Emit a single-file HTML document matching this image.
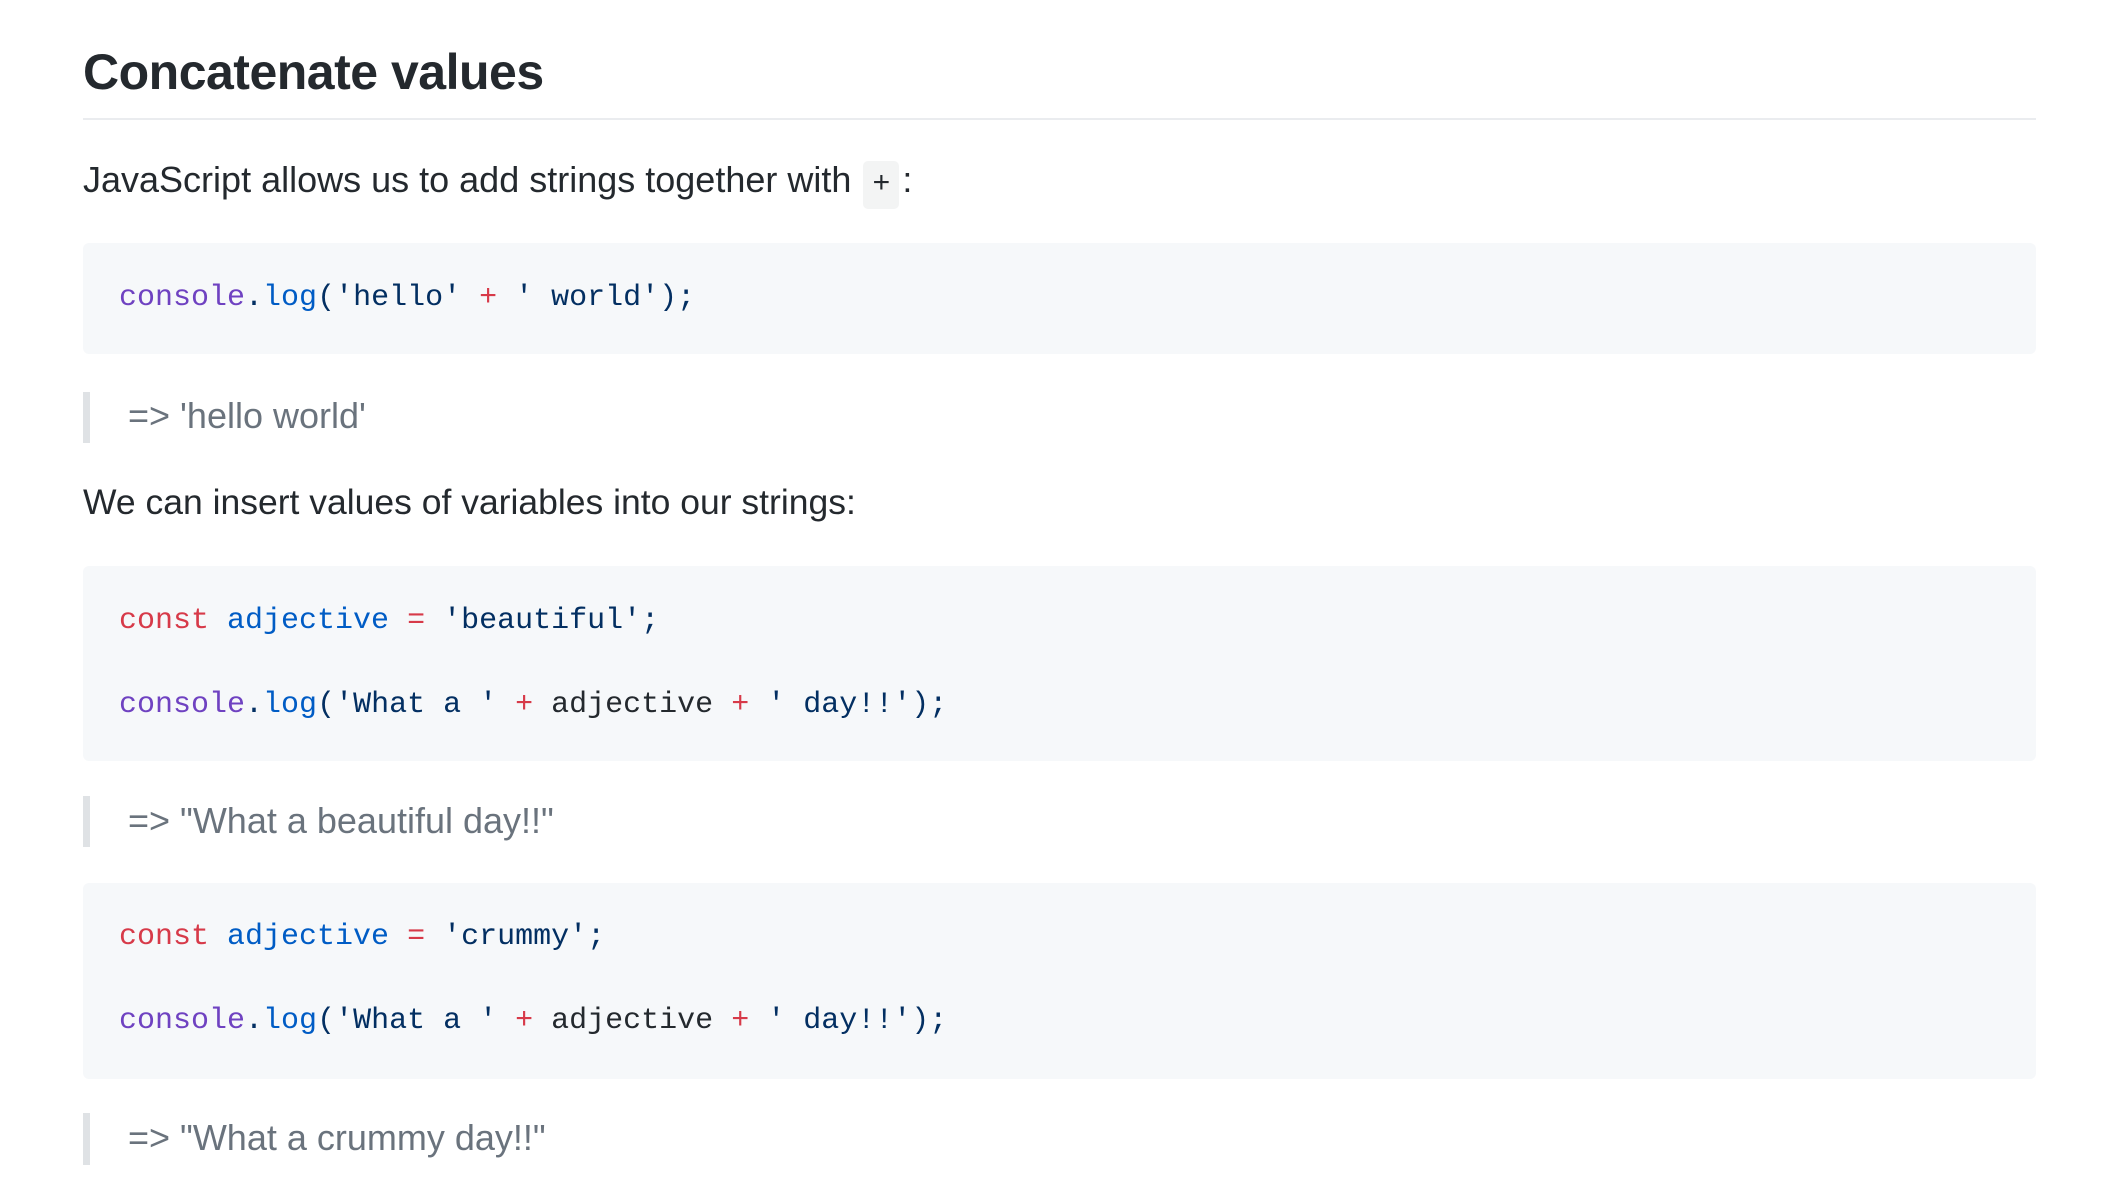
<!DOCTYPE html>
<html><head><meta charset="utf-8"><style>
html,body{margin:0;padding:0;background:#fff;width:2114px;height:1204px;overflow:hidden;position:relative}
body{font-family:"Liberation Sans",sans-serif;color:#24292e}
.a{position:absolute;white-space:pre}
h1{position:absolute;left:83px;top:36px;margin:0;font-size:50px;font-weight:bold;line-height:72px;letter-spacing:-0.5px}
.hr{position:absolute;left:83px;width:1953px;top:118px;height:2px;background:#eaecef}
.p{font-size:36px;line-height:40px}
.pre{position:absolute;left:83px;width:1953px;background:#f6f8fa;border-radius:6px}
.c{font-family:"Liberation Mono",monospace;font-size:30px;line-height:40px;color:#032f62;left:119px}
.bq{position:absolute;left:83px;width:7px;background:#dfe2e5}
.q{font-size:36px;line-height:40px;color:#6a737d;left:128px}
.pu{color:#6f42c1}.bl{color:#005cc5}.rd{color:#d73a49}
.ic{font-family:"Liberation Mono",monospace;background:#f3f4f4;border-radius:5px;padding:7px 9px;font-size:30px;margin:0 3px 0 2px}
</style></head><body>
<h1>Concatenate values</h1>
<div class="hr"></div>
<div class="a p" style="left:83px;top:160px">JavaScript allows us to add strings together with <span class="ic">+</span>:</div>
<div class="pre" style="top:243px;height:111px"></div>
<div class="a c" style="top:278px"><span class="pu">console</span>.<span class="bl">log</span>('hello' <span class="rd">+</span> ' world');</div>
<div class="bq" style="top:392px;height:51px"></div>
<div class="a q" style="top:396px">=&gt; 'hello world'</div>
<div class="a p" style="left:83px;top:482px;font-size:35.5px">We can insert values of variables into our strings:</div>
<div class="pre" style="top:566px;height:195px"></div>
<div class="a c" style="top:601px"><span class="rd">const</span> <span class="bl">adjective</span> <span class="rd">=</span> 'beautiful';</div>
<div class="a c" style="top:685px"><span class="pu">console</span>.<span class="bl">log</span>('What a ' <span class="rd">+</span> <span style="color:#24292e">adjective</span> <span class="rd">+</span> ' day!!');</div>
<div class="bq" style="top:796px;height:51px"></div>
<div class="a q" style="top:801px">=&gt; "What a beautiful day!!"</div>
<div class="pre" style="top:883px;height:196px"></div>
<div class="a c" style="top:917px"><span class="rd">const</span> <span class="bl">adjective</span> <span class="rd">=</span> 'crummy';</div>
<div class="a c" style="top:1001px"><span class="pu">console</span>.<span class="bl">log</span>('What a ' <span class="rd">+</span> <span style="color:#24292e">adjective</span> <span class="rd">+</span> ' day!!');</div>
<div class="bq" style="top:1113px;height:52px"></div>
<div class="a q" style="top:1118px">=&gt; "What a crummy day!!"</div>
</body></html>
